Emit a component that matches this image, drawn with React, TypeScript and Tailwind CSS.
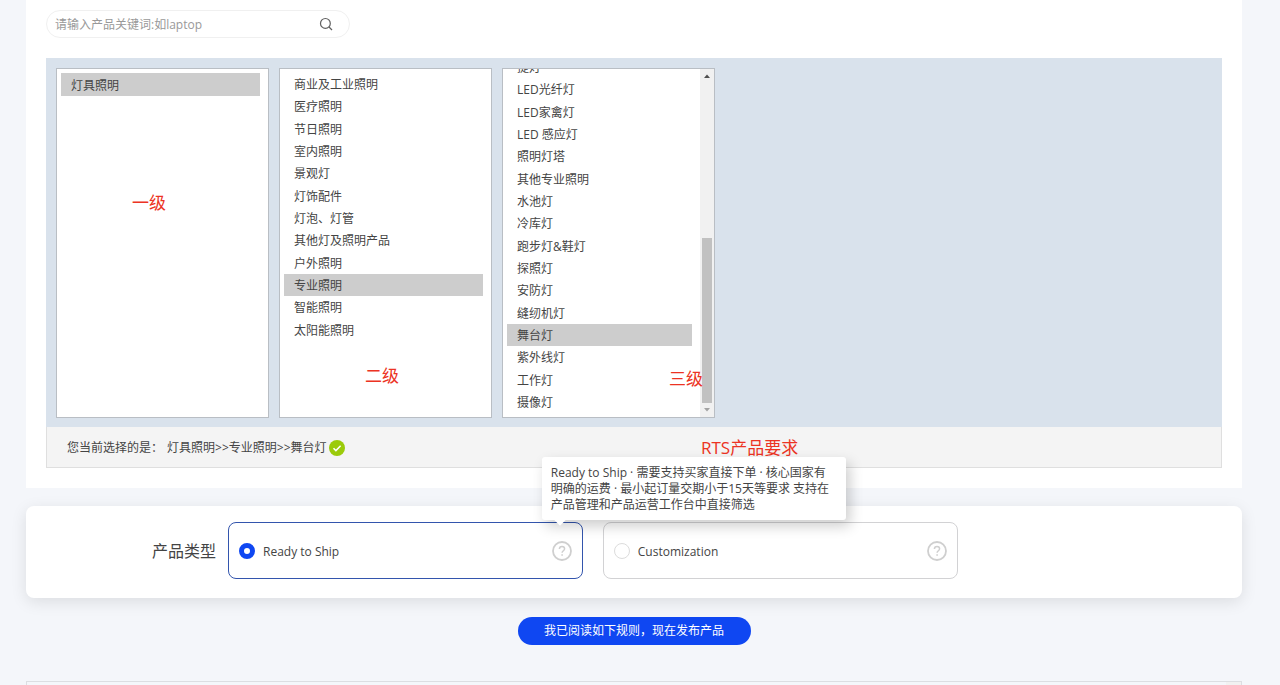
import { useState } from 'react'
import type { ReactNode } from 'react'
import clsx from 'clsx'

const LEVEL_1 = ['灯具照明']

const LEVEL_2 = [
  '商业及工业照明',
  '医疗照明',
  '节日照明',
  '室内照明',
  '景观灯',
  '灯饰配件',
  '灯泡、灯管',
  '其他灯及照明产品',
  '户外照明',
  '专业照明',
  '智能照明',
  '太阳能照明',
]

const LEVEL_3 = [
  '提灯',
  'LED光纤灯',
  'LED家禽灯',
  'LED 感应灯',
  '照明灯塔',
  '其他专业照明',
  '水池灯',
  '冷库灯',
  '跑步灯&鞋灯',
  '探照灯',
  '安防灯',
  '缝纫机灯',
  '舞台灯',
  '紫外线灯',
  '工作灯',
  '摄像灯',
]

type ProductType = 'rts' | 'custom'

interface CategoryListProps {
  label: string
  items: string[]
  value: string
  onSelect: (v: string) => void
  listClass: string
  scrolled?: boolean
  children?: ReactNode
}

function CategoryList({ label, items, value, onSelect, listClass, scrolled, children }: CategoryListProps) {
  return (
    <div className="relative flex h-[350px] w-[213px] overflow-hidden border border-[#b9bec4] bg-white">
      <div className={clsx('flex min-w-0 flex-1 flex-col py-1 pr-2 pl-1', scrolled && 'justify-end')}>
        <ul aria-label={label} className={clsx('grid shrink-0 auto-rows-fr', listClass)}>
          {items.map(item => (
            <li key={item} className="flex">
              <button
                type="button"
                onClick={() => onSelect(item)}
                className={clsx('w-full px-[10px] pt-0.5 text-left leading-5 whitespace-nowrap', item === value && 'bg-[#cdcdcd]')}
              >
                {item}
              </button>
            </li>
          ))}
        </ul>
      </div>
      {children}
    </div>
  )
}

// 滚动条
function ScrollBar() {
  return (
    <div className="flex w-[14px] flex-col items-center bg-[#f1f1f1]">
      <svg viewBox="0 0 14 14" className="h-[14px] w-[14px] shrink-0" aria-hidden="true">
        <path d="M4 9h6L7 5.5z" fill="#505050" />
      </svg>
      <div className="flex w-full flex-1 flex-col justify-end px-[2px]">
        <div className="h-[165px] bg-[#c1c1c1]" />
      </div>
      <svg viewBox="0 0 14 14" className="h-[14px] w-[14px] shrink-0" aria-hidden="true">
        <path d="M4 5h6L7 8.5z" fill="#a3a3a3" />
      </svg>
    </div>
  )
}

function Note({ className, children }: { className: string; children: ReactNode }) {
  return <span className={clsx('pointer-events-none absolute text-[17px] leading-6 text-[#ec3323]', className)}>{children}</span>
}

function HelpIcon() {
  return (
    <svg viewBox="0 0 20 20" className="h-5 w-5" fill="none" stroke="#cfcfcf" aria-hidden="true">
      <circle cx="10" cy="10" r="9" strokeWidth="1.8" />
      <path d="M7.4 8c0-1.6 1.1-2.6 2.6-2.6s2.6 1 2.6 2.4c0 1.9-2.5 2-2.5 4" strokeWidth="1.5" />
      <path d="M10.1 13.2v1.6" strokeWidth="1.6" />
    </svg>
  )
}

interface TypeOptionProps {
  id: ProductType
  label: string
  checked: boolean
  onChange: () => void
  tip?: string
}

function TypeOption({ id, label, checked, onChange, tip }: TypeOptionProps) {
  return (
    <div
      className={clsx(
        'flex h-[57px] flex-1 items-center rounded-lg border px-[10px]',
        checked ? 'border-[#3355ad]' : 'border-[#d2d2d4]',
      )}
    >
      <input
        id={id}
        type="radio"
        name="productType"
        checked={checked}
        onChange={onChange}
        className="h-4 w-4 appearance-none rounded-full border border-[#dcdcdc] bg-white checked:border-[5px] checked:border-[#0f47f2]"
      />
      <label htmlFor={id} className="flex-1 pt-0.5 pl-2">{label}</label>
      <div className="relative h-5 w-5">
        <button type="button" aria-label={label + ' 说明'} className="block">
          <HelpIcon />
        </button>
        {tip && (
          <div
            role="tooltip"
            className="absolute bottom-[41px] left-[-10px] z-20 w-[304px] rounded-[3px] bg-white px-[9px] pt-2 pb-[7px] leading-4 shadow-[4px_6px_14px_rgba(0,0,0,0.2)]"
          >
            {tip}
            <span className="absolute bottom-[-4px] left-[14px] h-2 w-2 rotate-45 bg-white" />
          </div>
        )}
      </div>
    </div>
  )
}

export default function App() {
  const [keyword, setKeyword] = useState('')
  const [first, setFirst] = useState('灯具照明')
  const [second, setSecond] = useState('专业照明')
  const [third, setThird] = useState('舞台灯')
  const [type, setType] = useState<ProductType>('rts')

  return (
    <div className="flex min-h-screen flex-col bg-[#f4f6fa] pr-[38px] pl-[26px] font-['Open_Sans','Noto_Sans_CJK_SC',sans-serif] text-xs text-[#444444]">
      {/* ── 类目选择 ── */}
      <section className="bg-white px-5 pt-[10px] pb-5">
        <form
          onSubmit={e => e.preventDefault()}
          className="flex h-7 w-[304px] items-center rounded-full border border-[#f0f0f0] pr-4 pl-2"
        >
          <input
            type="text"
            aria-label="产品关键词"
            value={keyword}
            onChange={e => setKeyword(e.target.value)}
            placeholder="请输入产品关键词:如laptop"
            className="min-w-0 flex-1 bg-transparent pt-0.5 outline-none placeholder:text-[#999999]"
          />
          <button type="submit" aria-label="搜索">
            <svg viewBox="0 0 14 14" className="h-[14px] w-[14px]" fill="none" stroke="#606060" strokeWidth="1.2" aria-hidden="true">
              <circle cx="6.4" cy="6.4" r="4.9" />
              <path d="M10 10l3 3" />
            </svg>
          </button>
        </form>

        <div className="mt-5 flex gap-[10px] bg-[#d9e2ec] px-[10px] pt-[10px] pb-[9px]">
          <CategoryList label="一级类目" items={LEVEL_1} value={first} onSelect={setFirst} listClass="h-[23px]">
            <Note className="top-[122px] left-[75px]">一级</Note>
          </CategoryList>
          <CategoryList label="二级类目" items={LEVEL_2} value={second} onSelect={setSecond} listClass="h-[268px]">
            <Note className="top-[295px] left-[85px]">二级</Note>
          </CategoryList>
          <CategoryList label="三级类目" items={LEVEL_3} value={third} onSelect={setThird} listClass="h-[357px]" scrolled>
            <ScrollBar />
            <Note className="top-[298px] left-[166px]">三级</Note>
          </CategoryList>
        </div>

        <div className="relative flex h-[41px] items-center border border-t-0 border-[#dfdfdf] bg-[#f4f4f4] pt-0.5 pl-5">
          <span className="pr-1">您当前选择的是：</span>
          <span>{first}&gt;&gt;{second}&gt;&gt;{third}</span>
          <svg viewBox="0 0 16 16" className="ml-[2px] h-4 w-4" aria-hidden="true">
            <circle cx="8" cy="8" r="8" fill="#9bcb0a" />
            <path d="M4.5 8.2l2.4 2.4 4.7-4.8" fill="none" stroke="#ffffff" strokeWidth="1.5" />
          </svg>
          <Note className="top-[9px] left-[654px]">RTS产品要求</Note>
        </div>
      </section>

      {/* ── 产品类型 ── */}
      <section className="mt-[18px] rounded-lg bg-white pt-4 pb-[19px] shadow-[0_4px_16px_rgba(0,0,0,0.1)]">
        <div role="radiogroup" aria-labelledby="type-title" className="flex items-center">
          <span id="type-title" className="w-[190px] text-right text-base">产品类型</span>
          <div className="ml-3 flex w-3/5 gap-5">
            <TypeOption
              id="rts"
              label="Ready to Ship"
              checked={type === 'rts'}
              onChange={() => setType('rts')}
              tip="Ready to Ship · 需要支持买家直接下单 · 核心国家有明确的运费 · 最小起订量交期小于15天等要求 支持在产品管理和产品运营工作台中直接筛选"
            />
            <TypeOption id="custom" label="Customization" checked={type === 'custom'} onChange={() => setType('custom')} />
          </div>
        </div>
      </section>

      <button type="button" className="mt-[19px] h-7 w-[233px] self-center rounded-full bg-[#0f47f2] text-white">
        我已阅读如下规则，现在发布产品
      </button>

      {/* 发布规则 */}
      <section className="mt-9 flex flex-1 justify-end border border-b-0 border-[#dcdee2]">
        <div className="w-[15px] bg-[#f1f1f1]" />
      </section>
    </div>
  )
}
